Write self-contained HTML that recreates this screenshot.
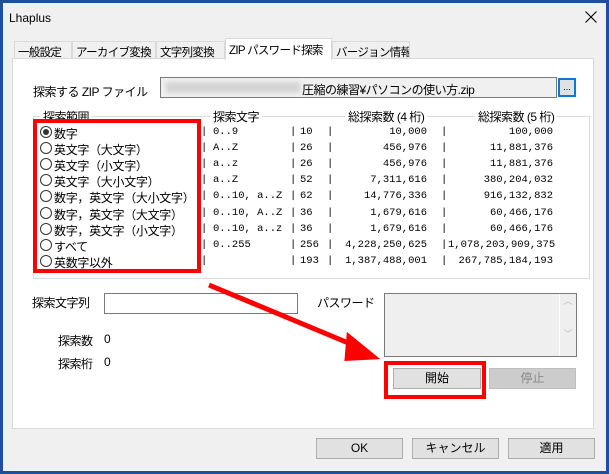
<!DOCTYPE html>
<html><head><meta charset="utf-8"><style>
*{margin:0;padding:0;box-sizing:border-box}
body{width:609px;height:474px;background:#1c4f9c;position:relative;overflow:hidden;font-family:"Liberation Sans","Noto Sans CJK JP",sans-serif;font-size:12px;color:#000}
.a{position:absolute;white-space:nowrap}
#win{position:absolute;left:3px;top:3px;width:603px;height:468px;background:#f0f0f0}
.m{font-family:"Liberation Mono","Noto Sans CJK JP",monospace;font-size:10.5px}
.tab{position:absolute;top:38px;height:18px;border:1px solid #d9d9d9;border-bottom:none;background:#f0f0f0;padding:2px 0 0 3px;font-size:11.5px;letter-spacing:-0.7px;white-space:nowrap;overflow:hidden}
.btn{position:absolute;background:#e1e1e1;border:1px solid #adadad;text-align:center;line-height:19px}
.r{text-align:right}
.n{letter-spacing:-0.5px}
</style></head><body>
<div id="win">
<div class="a" style="left:6px;top:8px;font-size:12px">Lhaplus</div>
<svg class="a" style="left:582px;top:8px" width="12" height="12"><path d="M0.5 0.5L11.5 11.5M11.5 0.5L0.5 11.5" stroke="#000" stroke-width="1.1"/></svg>
<div class="tab" style="left:11px;width:58px">一般設定</div>
<div class="tab" style="left:69px;width:84px">アーカイブ変換</div>
<div class="tab" style="left:153px;width:69px">文字列変換</div>
<div class="tab" style="left:222px;width:107px;top:35px;height:22px;background:#fff;z-index:2;padding-top:3px">ZIP パスワード探索</div>
<div class="tab" style="left:329px;width:78px">バージョン情報</div>
<div class="a" style="left:9px;top:55px;width:582px;height:371px;background:#fff;border:1px solid #d9d9d9"></div>
<div class="a n" style="left:30px;top:80px">探索する ZIP ファイル</div>
<div class="a" style="left:157px;top:74px;width:397px;height:21px;border:1px solid #7a7a7a;background:#f0f0f0"></div>
<div class="a" style="left:163px;top:79px;width:134px;height:11px;background:#d4d4d4;filter:blur(2px)"></div>
<div class="a n" style="left:299px;top:78px">圧縮の練習¥パソコンの使い方.zip</div>
<div class="a" style="left:555px;top:75px;width:18px;height:19px;border:2px solid #0a78d7;background:#e1e1e1;font-size:9px;text-align:center;line-height:14px">...</div>
<div class="a" style="left:30px;top:113px;width:557px;height:163px;border:1px solid #dcdcdc"></div>
<div class="a n" style="left:37px;top:105px;background:#fff;padding:0 3px">探索範囲</div>
<div class="a n" style="left:207px;top:105px;background:#fff;padding:0 3px">探索文字</div>
<div class="a n" style="left:342px;top:105px;background:#fff;padding:0 3px">総探索数 (4 桁)</div>
<div class="a n" style="left:472px;top:105px;background:#fff;padding:0 3px">総探索数 (5 桁)</div>
<div id="rows"></div>
<div class="a n" style="left:29px;top:291px">探索文字列</div>
<div class="a" style="left:101px;top:290px;width:194px;height:21px;border:1px solid #7a7a7a;background:#fff"></div>
<div class="a n" style="left:314px;top:291px">パスワード</div>
<div class="a" style="left:381px;top:290px;width:193px;height:64px;border:1px solid #7a7a7a;background:#efefef"></div>
<div class="a" style="left:556px;top:291px;width:17px;height:62px;border-left:1px solid #fff;color:#bbb;font-size:9px;text-align:center">︿<br><br><br>﹀</div>
<div class="a n" style="left:55px;top:329px">探索数</div><div class="a" style="left:101px;top:329px">0</div>
<div class="a n" style="left:55px;top:352px">探索桁</div><div class="a" style="left:101px;top:352px">0</div>
<div class="btn" style="left:390px;top:365px;width:88px;height:21px">開始</div>
<div class="btn" style="left:486px;top:365px;width:87px;height:21px;background:#cccccc;border-color:#bfbfbf;color:#8a8a8a">停止</div>
<div class="btn" style="left:313px;top:435px;width:87px;height:21px">OK</div>
<div class="btn" style="left:409px;top:435px;width:87px;height:21px">キャンセル</div>
<div class="btn" style="left:505px;top:435px;width:87px;height:21px">適用</div>
<div class="a" style="left:30px;top:116px;width:168px;height:154px;border:4px solid #f00"></div>
<div class="a" style="left:381px;top:358px;width:102px;height:38px;border:4px solid #f00"></div>
<svg class="a" style="left:0;top:0" width="603" height="468"><line x1="206" y1="282" x2="355" y2="344" stroke="#f00" stroke-width="5"/><polygon points="345,328 377,357 341,357" fill="#f00" transform="rotate(-3 360 350)"/></svg>
</div>
<script>
var d=[["数字","0..9","10","10,000","100,000"],["英文字（大文字）","A..Z","26","456,976","11,881,376"],["英文字（小文字）","a..z","26","456,976","11,881,376"],["英文字（大小文字）","a..Z","52","7,311,616","380,204,032"],["数字，英文字（大小文字）","0..10, a..Z","62","14,776,336","916,132,832"],["数字，英文字（大文字）","0..10, A..Z","36","1,679,616","60,466,176"],["数字，英文字（小文字）","0..10, a..z","36","1,679,616","60,466,176"],["すべて","0..255","256","4,228,250,625","1,078,203,909,375"],["英数字以外","","193","1,387,488,001","267,785,184,193"]];
var h="";d.forEach(function(r,i){var y=122+i*16.1;
h+='<div class="a" style="left:37px;top:'+(y+1)+'px;width:12px;height:12px;border:1px solid #333;border-radius:50%;background:#fff">'+(i==0?'<div style="margin:2px;width:6px;height:6px;border-radius:50%;background:#333"></div>':'')+'</div>';
h+='<div class="a" style="left:51px;top:'+y+'px;letter-spacing:-0.3px">'+r[0]+'</div>';
h+='<div class="a m" style="left:198px;top:'+(y+1)+'px">|</div><div class="a m" style="left:210px;top:'+(y+1)+'px">'+r[1]+'</div>';
h+='<div class="a m" style="left:287px;top:'+(y+1)+'px">|</div><div class="a m" style="left:297px;top:'+(y+1)+'px">'+r[2]+'</div>';
h+='<div class="a m" style="left:324px;top:'+(y+1)+'px">|</div><div class="a m r" style="left:326px;width:98px;top:'+(y+1)+'px">'+r[3]+'</div>';
h+='<div class="a m" style="left:438px;top:'+(y+1)+'px">|</div><div class="a m r" style="left:445px;width:105px;top:'+(y+1)+'px">'+r[4]+'</div>';});
document.getElementById("rows").innerHTML=h;
</script>
</body></html>
